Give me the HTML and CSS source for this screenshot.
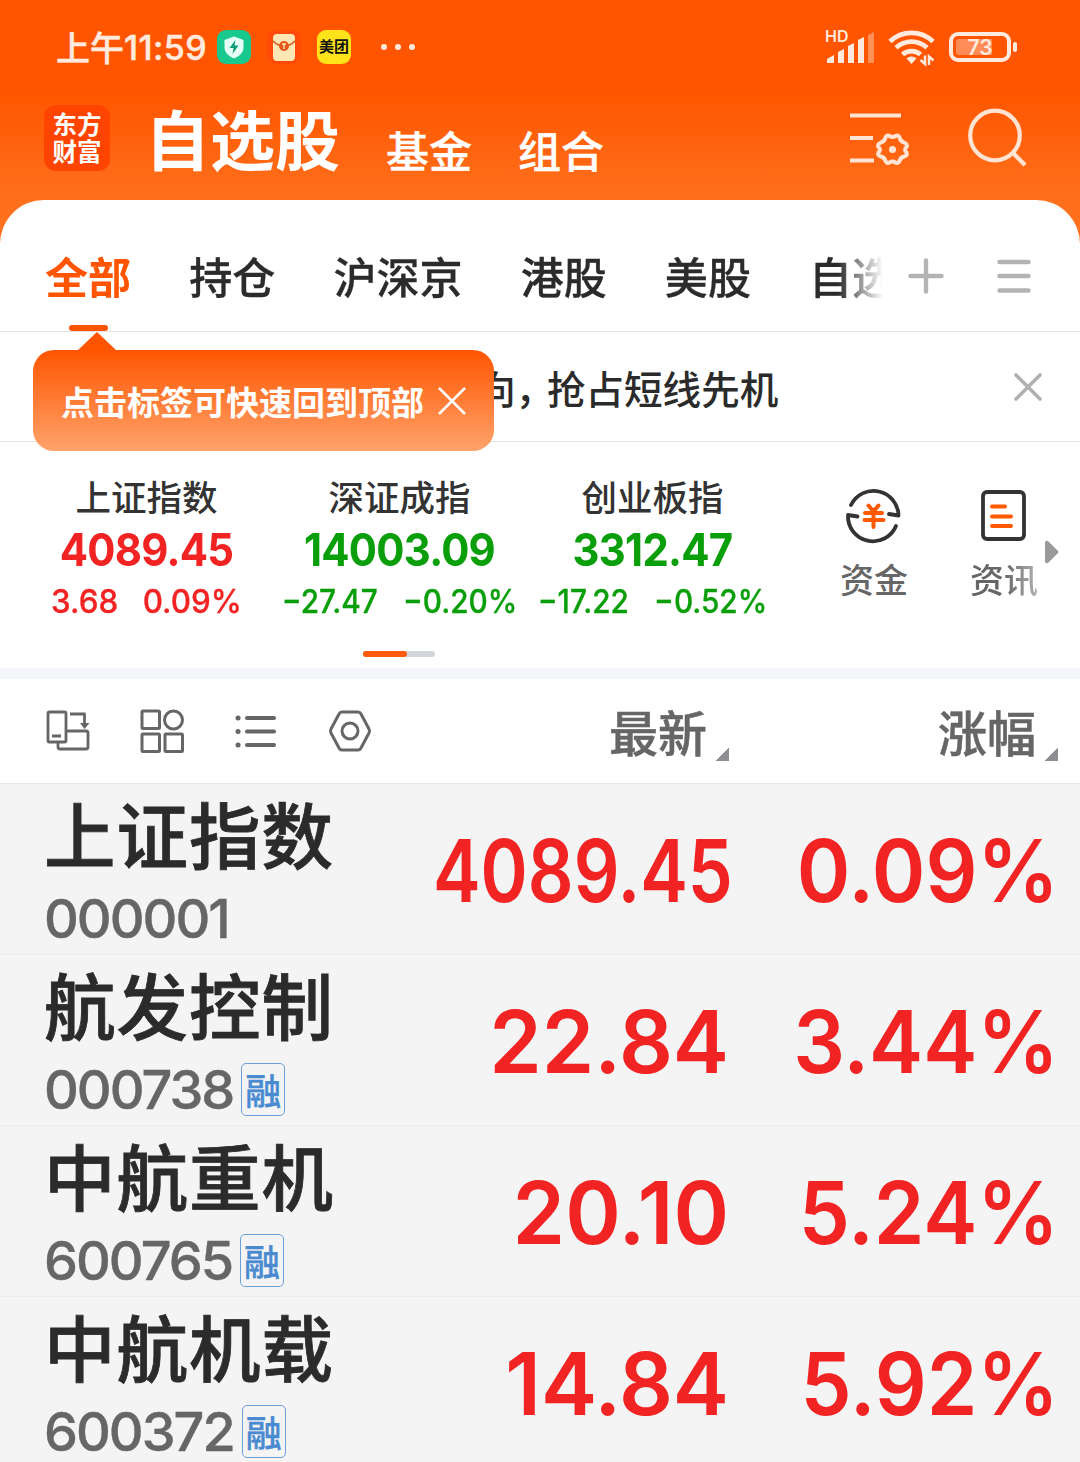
FILE: index.html
```
<!DOCTYPE html>
<html lang="zh-CN">
<head>
  <meta charset="UTF-8" />
  <meta name="viewport" content="width=device-width, initial-scale=1.0"/>
  <title>自选股</title>
  <link rel="stylesheet" href="styles.css">
</head>
<body>
  <div class="status-bar">
    <span class="clock">上午<span class="time">11:59</span></span>
    <svg class="app-badge" width="34" height="34" viewBox="0 0 34 34">
      <rect width="34" height="34" rx="9" fill="#17c98f"/>
      <path d="M17 6.500l9.500 3.500v7.500c0 5-4 8.500-9.500 11-5.500-2.500-9.500-6-9.500-11V10z" fill="#e6fff6"/>
      <path d="M18.500 10l-6 8h4l-1 6 6-8.500h-4z" fill="#0d9c74"/>
    </svg>
    <svg class="app-badge envelope" width="34" height="34" viewBox="0 0 34 34">
      <rect width="34" height="34" rx="9" fill="#ff4b08"/>
      <rect x="6" y="4" width="22" height="27" rx="4" fill="#ffe6b5"/>
      <path d="M6 11c3 3 6 5 11 5s8-2 11-5" fill="none" stroke="#d8561c" stroke-width="1.500"/>
      <circle cx="17" cy="16" r="5" fill="#e4571b"/>
      <path d="M15 14h4M17 14v5" stroke="#ffe6b5" stroke-width="1.400"/>
    </svg>
    <span class="meituan">美团</span>
    <span class="more"><i></i><i></i><i></i></span>
    <svg class="signal" width="50" height="36" viewBox="0 0 50 36">
      <text x="0" y="13" class="hd">HD</text>
      <g fill="#ffeadd">
        <path d="M2 34v-4l7-4v8z"/><path d="M13 34V23l6-3v14z"/>
        <path d="M23 34V17l6-3v20z"/><path d="M33 34V11l6-3v26z"/>
        <path d="M43 34V6l6-3v31z" opacity=".4"/>
      </g>
    </svg>
    <svg class="wifi" width="48" height="36" viewBox="0 0 48 36">
      <g fill="none" stroke="#ffeadd" stroke-width="4.800">
        <path d="M2 12.500a31 31 0 0 1 43 0"/>
        <path d="M8 18.800a22.500 22.500 0 0 1 31 0"/>
        <path d="M14.500 25.500a13.500 13.500 0 0 1 18 0"/>
      </g>
      <path d="M23.500 35l-5-5.500a7 7 0 0 1 10 0z" fill="#ffeadd"/>
      <path d="M37 26.500V35l-4.500-4M41 36v-8.500l4.500 4" fill="none" stroke="#ffeadd" stroke-width="2.500"/>
    </svg>
    <div class="battery"><span>73</span></div>
  </div>

  <header class="header">
    <div class="logo"><span>东方</span><span>财富</span></div>
    <h1>自选股</h1>
    <span class="nav-link">基金</span>
    <span class="nav-link">组合</span>
    <svg class="manage" width="60" height="54" viewBox="0 0 60 54" fill="none" stroke="#ffe3d3" stroke-width="4">
      <path d="M0 3.500h51M0 26h23M0 48.500h24"/>
      <path stroke-linejoin="round" stroke-width="4" d="M35.500 25.500Q37 22.500 39.500 24Q42.500 26 45.500 24Q48 22.500 49.500 25.500Q50.500 29.500 54 30.500Q58 32 56.500 35Q53.500 37.500 56.500 40.500Q58 43.500 54 44.500Q50.500 45.500 49.500 49Q48 52 45.500 50.500Q42.500 48.500 39.500 50.500Q37 52 35.500 49Q34.500 45.500 31 44.500Q27 43.500 28.500 40.500Q31.500 37.500 28.500 35Q27 32 31 30.500Q34.500 29.500 35.500 25.500Z"/>
      <circle cx="42.500" cy="37.500" r="3.500" fill="#ffe3d3" stroke="none"/>
    </svg>
    <svg class="search" width="60" height="60" viewBox="0 0 60 60" fill="none" stroke="#ffe3d3" stroke-width="4.200">
      <circle cx="27" cy="27.500" r="24.800"/>
      <path d="M44.500 44.500L57 57"/>
    </svg>
  </header>

  <main class="panel">
    <nav class="tabs">
      <div class="tab-list">
        <span class="tab active">全部</span>
        <span class="tab">持仓</span>
        <span class="tab">沪深京</span>
        <span class="tab">港股</span>
        <span class="tab">美股</span>
        <span class="tab">自选</span>
      </div>
      <svg width="36" height="36" viewBox="0 0 36 36" stroke="#b3b3b3" stroke-width="4.400" stroke-linecap="round">
        <path d="M2.500 18h31M18 2.500v31"/>
      </svg>
      <svg class="menu" width="34" height="36" viewBox="0 0 34 36" stroke="#b3b3b3" stroke-width="4.400" stroke-linecap="round">
        <path d="M2.500 4h29M2.500 18h29M2.500 32.500h29"/>
      </svg>
    </nav>

    <div class="notice">
      <p>向<span class="comma">，</span>抢占短线先机</p>
      <svg width="28" height="28" viewBox="0 0 28 28" stroke="#b0b0b0" stroke-width="3.600" stroke-linecap="round">
        <path d="M2 2l24 24M26 2L2 26"/>
      </svg>
      <div class="tip">
        <span>点击标签可快速回到顶部</span>
        <svg width="28" height="28" viewBox="0 0 28 28" stroke="#fff" stroke-width="2.500">
          <path d="M1 1l26 26M27 1L1 27"/>
        </svg>
      </div>
    </div>

    <section class="market">
      <div class="indices">
        <div class="index up">
          <div class="index-name">上证指数</div>
          <div class="index-value">4089.45</div>
          <div class="index-change"><span>3.68</span><span>0.09%</span></div>
        </div>
        <div class="index down">
          <div class="index-name">深证成指</div>
          <div class="index-value">14003.09</div>
          <div class="index-change"><span>−27.47</span><span>−0.20%</span></div>
        </div>
        <div class="index down">
          <div class="index-name">创业板指</div>
          <div class="index-value">3312.47</div>
          <div class="index-change"><span>−17.22</span><span>−0.52%</span></div>
        </div>
        <div class="pager"><i></i></div>
      </div>
      <div class="shortcut">
        <svg width="56" height="56" viewBox="0 0 56 56" fill="none" stroke="#333" stroke-width="3.800" stroke-linecap="round" stroke-linejoin="round">
          <path d="M5 17A25 25 0 0 1 52.500 27.500L43 26"/>
          <path d="M50 38A25 25 0 0 1 2 27L11.500 28.500"/>
          <g stroke="#ff5a00" stroke-width="4"><path d="M22.500 17.500l5 6 5-6M19 25h17M18.500 32h19M27.500 24v15"/></g>
        </svg>
        <span>资金</span>
      </div>
      <div class="shortcut news">
        <svg width="56" height="56" viewBox="0 0 56 56" fill="none" stroke="#333" stroke-width="3.800" stroke-linecap="round">
          <rect x="7" y="4" width="41" height="47" rx="4"/>
          <g stroke="#ff5a00" stroke-width="4"><path d="M16 18.500h13M16 28.500h19M16 38h19"/></g>
        </svg>
        <span>资讯</span>
      </div>
      <svg class="next" width="14" height="24" viewBox="0 0 14 24"><path d="M0 3Q0 0 3 1L13 11Q14 12 13 13L3 23Q0 24 0 21Z" fill="#999"/></svg>
    </section>

    <div class="list-head">
      <div class="tools">
        <svg width="44" height="44" viewBox="0 0 44 44" fill="none" stroke="#666" stroke-width="2.800" stroke-linejoin="round">
          <rect x="2" y="3" width="18" height="30" rx="1.500"/>
          <path d="M20 22h20q2 0 2 2v14q0 2-2 2H14q-2 0-2-2v-5M6 27h9M24 5h14.500v12"/>
          <path d="M34 14h9.500L38.500 20z" fill="#666" stroke="none"/>
        </svg>
        <svg width="44" height="44" viewBox="0 0 44 44" fill="none" stroke="#666" stroke-width="3">
          <rect x="2" y="2" width="17.500" height="17.500" rx="1"/>
          <circle cx="33.500" cy="11" r="9"/>
          <rect x="2" y="25" width="17.500" height="17.500" rx="1"/>
          <rect x="25" y="25" width="17.500" height="17.500" rx="1"/>
        </svg>
        <svg width="44" height="44" viewBox="0 0 44 44" stroke="#666" stroke-width="4" stroke-linecap="round">
          <path d="M13 9h27M13 22.500h27M13 36h27"/>
          <path d="M4 9h.1M4 22.500h.1M4 36h.1" stroke-width="5"/>
        </svg>
        <svg width="44" height="44" viewBox="0 0 44 44" fill="none" stroke="#666" stroke-width="3" stroke-linejoin="round">
          <path d="M14 3h16q2 0 3 2l8 15q1 2 0 4l-8 15q-1 2-3 2H14q-2 0-3-2L3 24q-1-2 0-4l8-15q1-2 3-2z"/>
          <circle cx="22" cy="22" r="8"/>
        </svg>
      </div>
      <span class="sort">最新</span>
      <span class="sort change">涨幅</span>
    </div>

    <div class="stock">
      <div class="info">
        <div class="name">上证指数</div>
        <div class="code">000001</div>
      </div>
      <div class="price narrow">4089.45</div>
      <div class="percent">0.09%</div>
    </div>
    <div class="stock">
      <div class="info">
        <div class="name">航发控制</div>
        <div class="code">000738<span class="tag">融</span></div>
      </div>
      <div class="price">22.84</div>
      <div class="percent">3.44%</div>
    </div>
    <div class="stock">
      <div class="info">
        <div class="name">中航重机</div>
        <div class="code">600765<span class="tag">融</span></div>
      </div>
      <div class="price">20.10</div>
      <div class="percent">5.24%</div>
    </div>
    <div class="stock">
      <div class="info">
        <div class="name">中航机载</div>
        <div class="code">600372<span class="tag">融</span></div>
      </div>
      <div class="price">14.84</div>
      <div class="percent">5.92%</div>
    </div>
  </main>
</body>
</html>
```
FILE: styles.css
```
:root {
  --orange: #ff5500;
  --red: #f22323;
  --green: #0a9f0a;
  --grey: #666;
  --digits: Inter, "Noto Sans CJK SC", sans-serif;
}

* {
  box-sizing: border-box;
}

body {
  margin: 0;
  height: 1462px;
  overflow: hidden;
  font-family: "Noto Sans CJK SC", sans-serif;
  font-weight: 500;
  color: #2b2b2b;
  background: linear-gradient(#ff5500 90px, #ff701c 200px, #ff701c);
}

svg {
  display: block;
  flex: none;
  overflow: visible;
}

.status-bar {
  display: flex;
  align-items: center;
  height: 94px;
  padding: 0 69px 0 56px;
  color: #ffeadd;
}

.clock {
  display: flex;
  align-items: center;
  width: 161px;
  font-size: 34px;
  line-height: 40px;
  white-space: nowrap;
  -webkit-text-stroke: .5px;
}

.time {
  margin-top: 1px;
  font-family: var(--digits);
  font-size: 34px;
  letter-spacing: .4px;
}

.envelope {
  margin: 0 16px;
}

.meituan {
  width: 34px;
  height: 34px;
  border-radius: 9px;
  background: #ffe31a;
  color: #111;
  font-size: 15px;
  font-weight: 700;
  line-height: 32px;
  text-align: center;
}

.more {
  display: flex;
  gap: 8px;
  margin: 0 auto 0 30px;
}

.more i {
  width: 6px;
  height: 6px;
  border-radius: 50%;
  background: #ffeadd;
}

.hd {
  fill: #ffeadd;
  font: 600 16px Inter, sans-serif;
}

.wifi {
  margin: 0 13px;
}

.battery {
  position: relative;
  width: 62px;
  height: 30px;
  border: 4px solid #ffeadd;
  border-radius: 9px;
  padding: 3px;
}

.battery span {
  display: block;
  height: 16px;
  border-radius: 3px;
  background: linear-gradient(90deg, #ff8c57 36px, transparent 36px);
  font: 600 21px/17px Inter, sans-serif;
  text-align: center;
}

.battery::after {
  content: "";
  position: absolute;
  right: -10px;
  top: 6px;
  width: 4px;
  height: 10px;
  border-radius: 2px;
  background: #ffeadd;
}

.header {
  display: flex;
  align-items: flex-start;
  height: 106px;
  padding: 11px 52px 0 44px;
  color: #fff;
}

.logo {
  display: flex;
  flex-direction: column;
  width: 66px;
  height: 66px;
  padding-top: 5px;
  border-radius: 12px;
  background: #ff4400;
  font-size: 24.500px;
  font-weight: 700;
  line-height: 27px;
  text-align: center;
}

.header h1 {
  margin: -1px 0 0 35px;
  font-size: 65px;
  font-weight: 700;
  line-height: 66px;
}

.nav-link {
  margin: 23px 0 0 46px;
  font-size: 43px;
  line-height: 42px;
  -webkit-text-stroke: .4px;
}

.manage {
  margin: 7px 58px 0 auto;
}

.search {
  margin-top: 3px;
}

.panel {
  height: 1262px;
  border-radius: 44px 44px 0 0;
  background: #fff;
}

.tabs {
  display: flex;
  align-items: center;
  height: 132px;
  padding: 20px 49px 0 0;
  border-bottom: 1px solid #e2e2e2;
}

.tab-list {
  display: flex;
  gap: 58px;
  width: 883px;
  margin-right: 25px;
  padding-left: 45px;
  overflow: hidden;
  white-space: nowrap;
  -webkit-mask-image: linear-gradient(90deg, #000 838px, transparent 883px);
  mask-image: linear-gradient(90deg, #000 838px, transparent 883px);
}

.tab {
  position: relative;
  flex: none;
  font-size: 43.1px;
  line-height: 111px;
  -webkit-text-stroke: .3px;
}

.tab.active {
  color: var(--orange);
  font-weight: 700;
  -webkit-text-stroke: 0;
}

.tab.active::after {
  content: "";
  position: absolute;
  left: 24px;
  bottom: 0;
  width: 39px;
  height: 6px;
  border-radius: 3px;
  background: var(--orange);
}

.menu {
  margin-left: 53px;
}

.notice {
  position: relative;
  display: flex;
  align-items: center;
  justify-content: space-between;
  height: 110px;
  padding: 0 38px 0 477px;
  border-bottom: 1px solid #e2e2e2;
}

.notice p {
  margin: 0;
  font-size: 38.6px;
}

.comma {
  margin-right: 12px;
  font-feature-settings: "halt";
}

/* first-run hint under the active tab */
.tip {
  position: absolute;
  left: 33px;
  top: 18px;
  display: flex;
  align-items: center;
  gap: 14px;
  width: 461px;
  height: 101px;
  padding-left: 28px;
  border-radius: 21px;
  background: linear-gradient(#ff5500, #ffa36b);
  color: #fff;
  font-size: 33px;
  font-weight: 700;
}

.tip::before {
  content: "";
  position: absolute;
  left: 44px;
  top: -18px;
  border: 20px solid transparent;
  border-top: 0;
  border-bottom: 19px solid #ff5500;
}

.market {
  display: flex;
  align-items: flex-start;
  height: 237px;
  padding-left: 20px;
  border-bottom: 11px solid #f5f6f9;
}

.indices {
  display: flex;
  flex-wrap: wrap;
  width: 759px;
  padding-top: 33px;
}

.index {
  width: 253px;
  text-align: center;
  white-space: nowrap;
}

.index-name {
  color: #333;
  font-size: 35.500px;
  line-height: 42px;
}

.index-value {
  margin-top: 10px;
  font-family: var(--digits);
  font-size: 45px;
  font-weight: 700;
  line-height: 46px;
  letter-spacing: -.8px;
  transform: scaleX(.93);
}

.index-change {
  display: flex;
  justify-content: center;
  gap: 25px;
  margin-top: 9px;
  font-family: var(--digits);
  font-size: 32px;
  line-height: 40px;
  -webkit-text-stroke: .3px;
  transform: scaleX(.98);
}

.up {
  color: var(--red);
}

.down {
  color: var(--green);
}

.down .index-change {
  gap: 27px;
  transform: scaleX(.93);
}

.pager {
  width: 72px;
  height: 6px;
  margin: 29px 0 0 343px;
  border-radius: 3px;
  background: #d2d5da;
}

.pager i {
  display: block;
  width: 44px;
  height: 6px;
  border-radius: 3px;
  background: #ff5a0a;
}

.shortcut {
  display: flex;
  flex-direction: column;
  align-items: center;
  width: 130px;
  margin-left: 30px;
  padding-top: 46px;
  color: var(--grey);
  font-size: 34px;
}

.shortcut span {
  margin-top: 15px;
  line-height: 40px;
}

.shortcut.news {
  margin-left: 0;
}

.news span {
  -webkit-mask-image: linear-gradient(90deg, #000 50%, rgba(0, 0, 0, .5));
  mask-image: linear-gradient(90deg, #000 50%, rgba(0, 0, 0, .5));
}

.next {
  margin: 98px 0 0 -24px;
}

.list-head {
  display: flex;
  align-items: center;
  height: 105px;
  padding-left: 46px;
  border-bottom: 1px solid #e8e8e8;
}

.tools {
  display: flex;
  gap: 50px;
  width: 509px;
}

.sort {
  width: 174px;
  padding-right: 22px;
  color: var(--grey);
  font-size: 49px;
  line-height: 60px;
  text-align: right;
  -webkit-text-stroke: .5px;
  background: linear-gradient(135deg, transparent 50%, #8e8e93 50%) 100% 100% / 14px 14px no-repeat;
}

.sort.change {
  width: 329px;
}

.stock {
  display: flex;
  height: 171px;
  padding: 0 25px 0 44px;
  border-bottom: 1px solid #eaeaea;
  background: #f4f4f4;
}

.info {
  width: 330px;
  padding-top: 10px;
}

.name {
  font-size: 71.500px;
  line-height: 76px;
  letter-spacing: 1px;
  -webkit-text-stroke: .8px;
}

.code {
  display: flex;
  align-items: center;
  height: 54px;
  margin-top: 21px;
  color: var(--grey);
  font-family: var(--digits);
  font-size: 54px;
  letter-spacing: -2px;
  -webkit-text-stroke: .4px;
}

.tag {
  width: 44px;
  height: 53px;
  margin-left: 8px;
  border: 1px solid #6aa0dc;
  border-radius: 5px;
  color: #4a8ad0;
  font-family: "Noto Sans CJK SC", sans-serif;
  font-size: 36px;
  line-height: 50px;
  letter-spacing: 0;
  text-align: center;
}

.price,
.percent {
  width: 355px;
  color: var(--red);
  font-family: var(--digits);
  font-size: 86px;
  font-weight: 600;
  line-height: 175px;
  text-align: right;
  transform: scaleX(.98);
  transform-origin: right;
}

.percent {
  width: 330px;
  margin-right: -7px;
  transform: scaleX(.945);
}

.price.narrow {
  width: 351px;
  margin-right: 4px;
  transform: scaleX(.832);
}
```
